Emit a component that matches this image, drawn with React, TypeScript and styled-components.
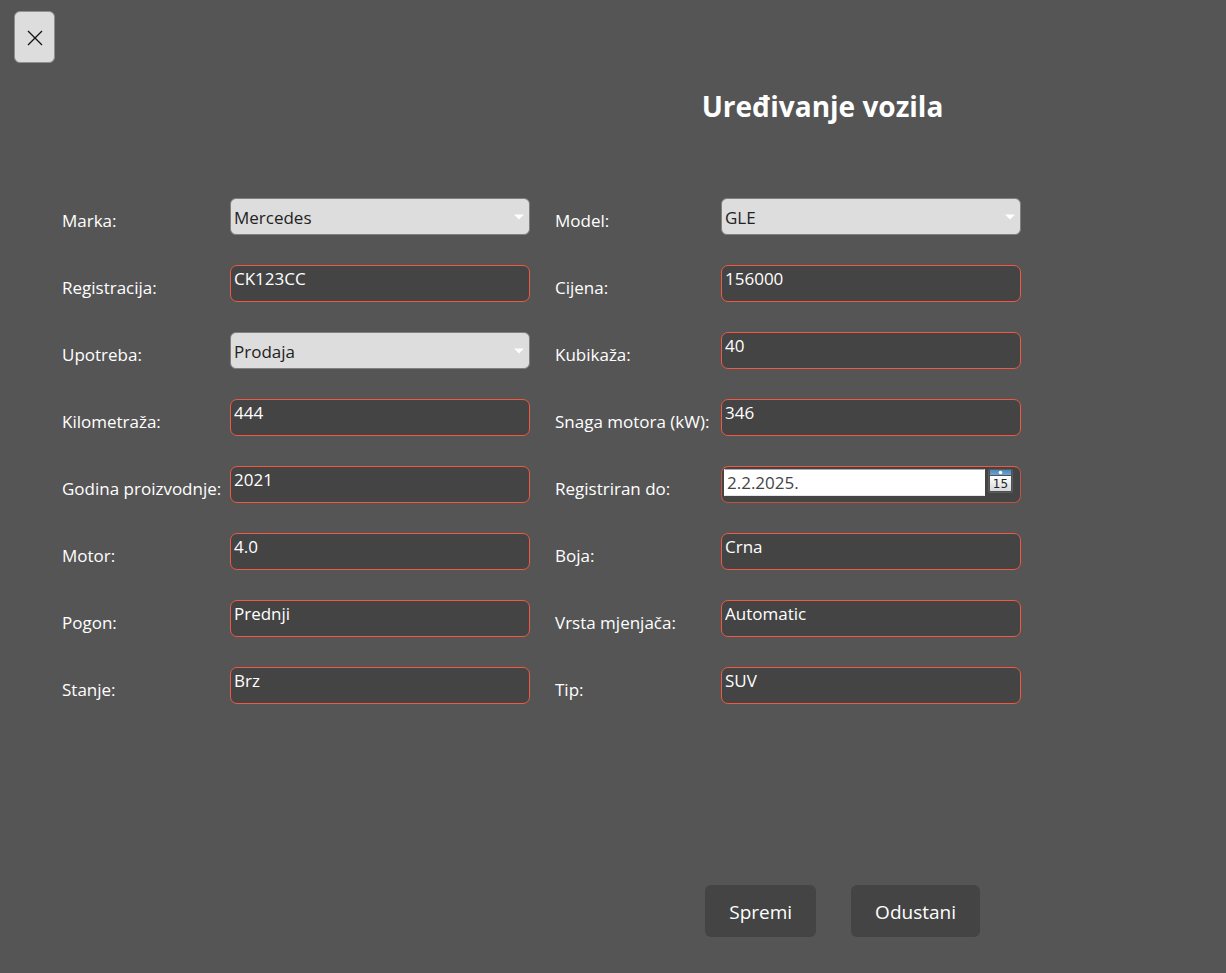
import React, { useId } from "react";
import styled, { createGlobalStyle } from "styled-components";

const GlobalStyle = createGlobalStyle`
  *, *::before, *::after { box-sizing: border-box; }
  body {
    margin: 0;
    background: #555555;
    color: #ffffff;
    font-family: "Segoe UI", "Open Sans", "Noto Sans", sans-serif;
    font-size: 17px;
  }
  button, input, select { font: inherit; }
`;

const Page = styled.main`
  display: flex;
  flex-direction: column;
  min-height: 100vh;
  padding: 11px 0 36px;
`;

const CloseButton = styled.button`
  display: flex;
  align-items: center;
  justify-content: center;
  align-self: flex-start;
  width: 41px;
  height: 52px;
  margin-left: 14px;
  padding: 2px 0 0;
  border: 1px solid #909090;
  border-radius: 6px;
  background: #dddddd;
  color: #111111;
`;

const Title = styled.h1`
  margin: 23px 0 72px;
  padding-left: 419px;
  font-size: 28px;
  line-height: 40px;
  font-weight: 700;
  text-align: center;
`;

const Form = styled.form`
  display: flex;
  flex: 1;
  flex-direction: column;
  justify-content: space-between;
`;

const Fields = styled.div`
  display: grid;
  grid-template-columns: 168px minmax(0, 1fr) 191px minmax(0, 1fr);
  row-gap: 30px;
  padding: 0 205px 40px 62px;
`;

const Label = styled.label<{ $second: boolean }>`
  padding: 11px 0 2px ${(p) => (p.$second ? 25 : 0)}px;
  line-height: 24px;
  white-space: nowrap;
`;

const TextInput = styled.input`
  width: 100%;
  min-width: 0;
  height: 37px;
  padding: 0 3px 10px;
  border: 1px solid #f0583f;
  border-radius: 7px;
  background: #444444;
  color: #ffffff;
`;

const SelectBox = styled.div`
  display: grid;
  align-items: center;
  height: 37px;
  & > * { grid-area: 1 / 1; }
`;

const Select = styled.select`
  appearance: none;
  width: 100%;
  height: 37px;
  padding: 2px 20px 0 3px;
  border: 1px solid #808080;
  border-radius: 6px;
  background: #dddddd;
  color: #222222;
`;

const Arrow = styled.svg`
  justify-self: end;
  margin-right: 6px;
  pointer-events: none;
`;

const DateBox = styled.div`
  display: flex;
  align-items: flex-start;
  gap: 3px;
  height: 37px;
  padding: 2px 7px 0 2px;
  border: 1px solid #c05343;
  border-top-color: #f0583f;
  border-radius: 7px;
  background: #444444;
`;

const DateInput = styled.input`
  flex: 1;
  min-width: 0;
  height: 27px;
  padding: 0 2px;
  border: 1px solid #ffffff;
  border-top-color: #abadb3;
  border-bottom-color: #e3e9ef;
  background: #ffffff;
  color: #444444;
`;

const CalendarButton = styled.button`
  display: flex;
  padding: 0;
  border: 0;
  background: none;
`;

const Actions = styled.div`
  display: flex;
  justify-content: flex-end;
  gap: 35px;
  padding-right: 246px;
`;

const ActionButton = styled.button`
  height: 52px;
  padding: 2px 24px 0;
  border: 0;
  border-radius: 6px;
  background: #444444;
  color: #ffffff;
  font-size: 19px;
`;

type FieldData = {
  label: string;
  value: string;
  kind?: "select" | "date";
};

const fields: FieldData[] = [
  { label: "Marka:", value: "Mercedes", kind: "select" },
  { label: "Model:", value: "GLE", kind: "select" },
  { label: "Registracija:", value: "CK123CC" },
  { label: "Cijena:", value: "156000" },
  { label: "Upotreba:", value: "Prodaja", kind: "select" },
  { label: "Kubikaža:", value: "40" },
  { label: "Kilometraža:", value: "444" },
  { label: "Snaga motora (kW):", value: "346" },
  { label: "Godina proizvodnje:", value: "2021" },
  { label: "Registriran do:", value: "2.2.2025.", kind: "date" },
  { label: "Motor:", value: "4.0" },
  { label: "Boja:", value: "Crna" },
  { label: "Pogon:", value: "Prednji" },
  { label: "Vrsta mjenjača:", value: "Automatic" },
  { label: "Stanje:", value: "Brz" },
  { label: "Tip:", value: "SUV" },
];

function CalendarIcon() {
  return (
    <svg width="25" height="24" viewBox="0 0 25 24" aria-hidden="true">
      <defs>
        <linearGradient id="calendar-top" x1="0" y1="0" x2="0" y2="1">
          <stop offset="0" stopColor="#4c88bd" />
          <stop offset="1" stopColor="#6ba5d4" />
        </linearGradient>
        <linearGradient id="calendar-page" x1="0" y1="0" x2="0" y2="1">
          <stop offset="0" stopColor="#ffffff" />
          <stop offset="1" stopColor="#d5d9dd" />
        </linearGradient>
      </defs>
      <rect x="0.5" y="0.5" width="24" height="23" rx="1" fill="#505050" stroke="#5c5c5c" />
      <rect x="2" y="1" width="21" height="5" fill="url(#calendar-top)" />
      <circle cx="12.5" cy="3.5" r="1.8" fill="#ffffff" />
      <rect x="2" y="7" width="21" height="15" fill="url(#calendar-page)" />
      <text
        x="12.5"
        y="19"
        textAnchor="middle"
        fontFamily="DejaVu Sans, sans-serif"
        fontSize="12"
        fill="#222222"
      >
        15
      </text>
    </svg>
  );
}

function Field({ field, second }: { field: FieldData; second: boolean }) {
  const id = useId();
  return (
    <>
      <Label htmlFor={id} $second={second}>{field.label}</Label>
      {field.kind === "select" ? (
        <SelectBox>
          <Select id={id} defaultValue={field.value}>
            <option>{field.value}</option>
          </Select>
          <Arrow width="10" height="6" viewBox="0 0 10 6" aria-hidden="true">
            <path d="M0 0.5h10L5 5.5z" fill="#ffffff" />
          </Arrow>
        </SelectBox>
      ) : field.kind === "date" ? (
        <DateBox>
          <DateInput id={id} type="text" defaultValue={field.value} />
          <CalendarButton type="button" aria-label="Otvori kalendar">
            <CalendarIcon />
          </CalendarButton>
        </DateBox>
      ) : (
        <TextInput id={id} type="text" defaultValue={field.value} />
      )}
    </>
  );
}

export default function App() {
  return (
    <>
      <GlobalStyle />
      <Page>
        <CloseButton type="button" aria-label="Zatvori">
          <svg width="16" height="16" viewBox="0 0 16 16" aria-hidden="true">
            <path d="M1 1l14 14M15 1l-14 14" stroke="currentColor" strokeWidth="1.3" />
          </svg>
        </CloseButton>
        <Title>Uređivanje vozila</Title>
        <Form onSubmit={(e) => e.preventDefault()}>
          <Fields>
            {fields.map((field, i) => (
              <Field key={field.label} field={field} second={i % 2 === 1} />
            ))}
          </Fields>
          <Actions>
            <ActionButton type="submit">Spremi</ActionButton>
            <ActionButton type="button">Odustani</ActionButton>
          </Actions>
        </Form>
      </Page>
    </>
  );
}
